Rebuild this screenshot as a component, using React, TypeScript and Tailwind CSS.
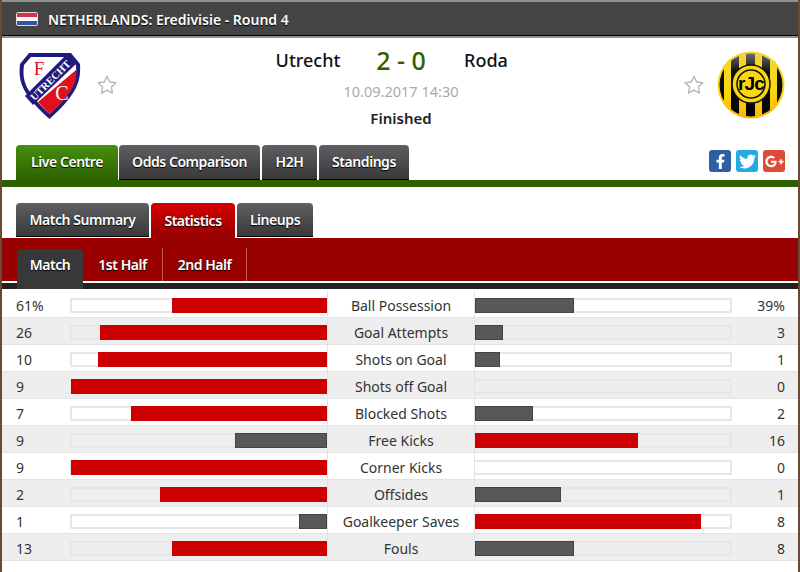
import { FaFacebookF, FaGooglePlusG, FaTwitter } from "react-icons/fa";

const stats = [
  { home: "61%", label: "Ball Possession", away: "39%", left: 155, right: 99, leftRed: true, rightRed: false },
  { home: "26", label: "Goal Attempts", away: "3", left: 227, right: 28, leftRed: true, rightRed: false },
  { home: "10", label: "Shots on Goal", away: "1", left: 229, right: 25, leftRed: true, rightRed: false },
  { home: "9", label: "Shots off Goal", away: "0", left: 256, right: 0, leftRed: true, rightRed: false },
  { home: "7", label: "Blocked Shots", away: "2", left: 196, right: 58, leftRed: true, rightRed: false },
  { home: "9", label: "Free Kicks", away: "16", left: 92, right: 163, leftRed: false, rightRed: true },
  { home: "9", label: "Corner Kicks", away: "0", left: 256, right: 0, leftRed: true, rightRed: false },
  { home: "2", label: "Offsides", away: "1", left: 167, right: 86, leftRed: true, rightRed: false },
  { home: "1", label: "Goalkeeper Saves", away: "8", left: 28, right: 226, leftRed: false, rightRed: true },
  { home: "13", label: "Fouls", away: "8", left: 155, right: 99, leftRed: true, rightRed: false },
];

const tabText = "text-white text-[14px] font-semibold tracking-[-0.45px] [text-shadow:0_1px_1px_#000]";
const grayTab = "flex items-center justify-center rounded-t-[4px] border-b border-black bg-gradient-to-b from-[#606064] to-[#39393a] " + tabText;

function Star() {
  return (
    <svg width="22" height="22" viewBox="0 0 24 24" fill="#fff" stroke="#b5b5b5" strokeWidth="1.5" strokeLinejoin="round">
      <path d="M12 2.5l2.9 6.2 6.8.8-5 4.6 1.3 6.7-6-3.3-6 3.3 1.3-6.7-5-4.6 6.8-.8z" />
    </svg>
  );
}

function UtrechtCrest() {
  return (
    <svg width="62" height="68" viewBox="0 0 62 68">
      <path d="M10 1H52L61 12C62 30 58 42 30.500 67C3 42 -1 30 1 12Z" fill="#1f1a7c" />
      <path d="M12 5H49L57 13C58 29 55 39 30.500 62C6 39 3 29 5 13Z" fill="#fff" />
      <path d="M57 18C58 30 55 39 30.500 62L19 50Z" fill="#e0101c" />
      <path d="M6 44L46 4H51L57 12L14 53Z" fill="#1f1a7c" />
      <text transform="translate(31 28) rotate(-45)" x="0" y="4" textAnchor="middle" fill="#fff" fontFamily="Liberation Serif, serif" fontWeight="700" fontSize="10.500">UTRECHT</text>
      <text x="20" y="23" textAnchor="middle" fill="#e0101c" fontFamily="Liberation Serif, serif" fontSize="19">F</text>
      <text x="43" y="48" textAnchor="middle" fill="#fff" fontFamily="Liberation Serif, serif" fontSize="20">C</text>
    </svg>
  );
}

function RodaCrest() {
  return (
    <svg width="68" height="68" viewBox="0 0 68 68">
      <defs>
        <linearGradient id="gold" x1="0" y1="0" x2="0" y2="1">
          <stop offset="0" stopColor="#f4d43a" />
          <stop offset="0.6" stopColor="#fbd80c" />
          <stop offset="1" stopColor="#fbb30a" />
        </linearGradient>
        <linearGradient id="dark" x1="0" y1="0" x2="0" y2="1">
          <stop offset="0" stopColor="#77777a" />
          <stop offset="0.3" stopColor="#111" />
          <stop offset="1" stopColor="#000" />
        </linearGradient>
        <clipPath id="disc">
          <circle cx="34" cy="34" r="31.500" />
        </clipPath>
      </defs>
      <circle cx="34" cy="34" r="33.500" fill="url(#gold)" />
      <g clipPath="url(#disc)" fill="url(#dark)">
        <rect x="0" y="0" width="7" height="68" />
        <rect x="14" y="0" width="8" height="68" />
        <rect x="29" y="0" width="9" height="68" />
        <rect x="45" y="0" width="8" height="68" />
        <rect x="60" y="0" width="8" height="68" />
      </g>
      <circle cx="34" cy="33" r="19" fill="#fbd80c" stroke="#111" strokeWidth="1.500" />
      <circle cx="34" cy="33" r="14" fill="#fbd80c" stroke="#111" strokeWidth="1.500" />
      <text x="34" y="39" textAnchor="middle" fill="#000" fontFamily="Liberation Sans, sans-serif" fontWeight="700" fontSize="19" letterSpacing="-0.800">rJc</text>
    </svg>
  );
}

function Bar({ width, red, side }: { width: number; red: boolean; side: "left" | "right" }) {
  return (
    <div className={"flex h-[15px] w-[257px] shrink-0 border-2 border-[#e6e6e6] " + (side === "left" ? "justify-end border-r-0" : "justify-start border-l-0")}>
      {width > 0 && (
        <div
          className={"-my-[2px] h-[15px] shrink-0 " + (red ? "bg-[#cc0000]" : "border border-[#444] bg-[#585858]")}
          style={{ width }}
        />
      )}
    </div>
  );
}

export default function App() {
  return (
    <div className="h-[572px] w-[800px] overflow-hidden border-x-2 border-x-[#6b4a35] bg-white font-['Noto_Sans',sans-serif] text-[#333]">
      <div className="flex h-[38px] items-center gap-[10px] border-t-2 border-b-2 border-t-[#8f8f8f] border-b-[#8f8f8f] bg-[#444] pl-[14px] shadow-[inset_0_-1px_0_#000]">
        <div className="h-[14px] w-[22px] overflow-hidden rounded-[2px] border border-[#ddd]">
          <div className="h-1/3 bg-[#d9304a]" />
          <div className="h-1/3 bg-white" />
          <div className="h-1/3 bg-[#3a4fa8]" />
        </div>
        <span className="text-[14px] font-semibold text-white [text-shadow:0_1px_1px_#000]">NETHERLANDS: Eredivisie - Round 4</span>
      </div>

      <div className="relative h-[107px]">
        <div className="absolute left-[17px] top-[14px]">
          <UtrechtCrest />
        </div>
        <div className="absolute left-[94px] top-[36px]">
          <Star />
        </div>
        <div className="absolute right-[93px] top-[36px]">
          <Star />
        </div>
        <div className="absolute right-[13px] top-[13px]">
          <RodaCrest />
        </div>
        <div className="flex flex-col items-center pl-[2px] pt-[7px]">
          <div className="-ml-[18px] flex h-[31px] items-center text-[#111]">
            <span className="w-[66px] text-center text-[18px] font-medium">Utrecht</span>
            <span className="ml-[35px] mr-[37px] w-[50px] text-center text-[25px] font-medium text-[#2d6100]">2 - 0</span>
            <span className="w-[46px] text-center text-[18px] font-medium">Roda</span>
          </div>
          <div className="mt-[2px] text-[14.5px] leading-[26px] text-[#aaa]">10.09.2017 14:30</div>
          <div className="mt-[4px] text-[15px] font-semibold leading-[20px] text-[#222]">Finished</div>
        </div>
      </div>

      <div className="flex h-[35px] items-stretch pl-[14px]">
        <div className={"flex w-[102px] items-center justify-center rounded-t-[4px] bg-gradient-to-b from-[#45900f] to-[#2d6100] pb-[2px] " + tabText}>Live Centre</div>
        <div className={"ml-[1px] w-[141px] pb-[2px] " + grayTab}>Odds Comparison</div>
        <div className={"ml-[2px] w-[55px] pb-[2px] " + grayTab}>H2H</div>
        <div className={"ml-[2px] w-[90px] pb-[2px] " + grayTab}>Standings</div>
        <div className="ml-auto flex gap-[5px] pr-[13px] pt-[5px]">
          <div className="flex h-[22px] w-[22px] items-center justify-center rounded-[3px] bg-[#2f5ea5] text-white">
            <FaFacebookF size={15} />
          </div>
          <div className="flex h-[22px] w-[22px] items-center justify-center rounded-[3px] bg-[#25aae1] text-white">
            <FaTwitter size={17} />
          </div>
          <div className="flex h-[22px] w-[22px] items-center justify-center rounded-[3px] bg-[#dd4b39] text-white">
            <FaGooglePlusG size={19} />
          </div>
        </div>
      </div>
      <div className="h-[7px] bg-[#2d6100]" />

      <div className="flex h-[51px] items-end pl-[14px]">
        <div className={"mb-[1px] h-[34px] w-[133px] " + grayTab}>Match Summary</div>
        <div className={"ml-[2px] flex h-[35px] w-[84px] items-center justify-center rounded-t-[4px] bg-gradient-to-b from-[#d40000] to-[#990000] " + tabText}>Statistics</div>
        <div className={"mb-[1px] ml-[2px] h-[34px] w-[76px] " + grayTab}>Lineups</div>
      </div>

      <div className="flex h-[43px] items-end bg-[#990000] pl-[15px]">
        <div className={"z-10 -mb-[8px] flex h-[40px] w-[66px] items-center justify-center rounded-t-[4px] bg-[#383838] pb-[10px] " + tabText}>Match</div>
        <div className={"flex h-[33px] w-[80px] items-center justify-center border-r border-r-[#c25a5a] " + tabText}>1st Half</div>
        <div className={"flex h-[33px] w-[84px] items-center justify-center border-r border-r-[#c25a5a] " + tabText}>2nd Half</div>
      </div>
      <div className="h-[8px] border-t-2 border-t-white bg-[#222]" />
      <div className="h-[2px]" />

      {stats.map((s, i) => (
        <div key={s.label} className={"flex h-[27px] items-center border-b border-b-[#e4e4e4] pt-[2px] text-[14px] " + (i % 2 === 1 ? "bg-[#eeeeee]" : "bg-white")}>
          <div className="w-[68px] pl-[14px]">{s.home}</div>
          <Bar width={s.left} red={s.leftRed} side="left" />
          <div className="-mt-[2px] flex h-[27px] w-[148px] items-center justify-center border-x border-x-[#e4e4e4] pt-[2px]">{s.label}</div>
          <Bar width={s.right} red={s.rightRed} side="right" />
          <div className="flex-1 pr-[13px] text-right">{s.away}</div>
        </div>
      ))}
    </div>
  );
}
